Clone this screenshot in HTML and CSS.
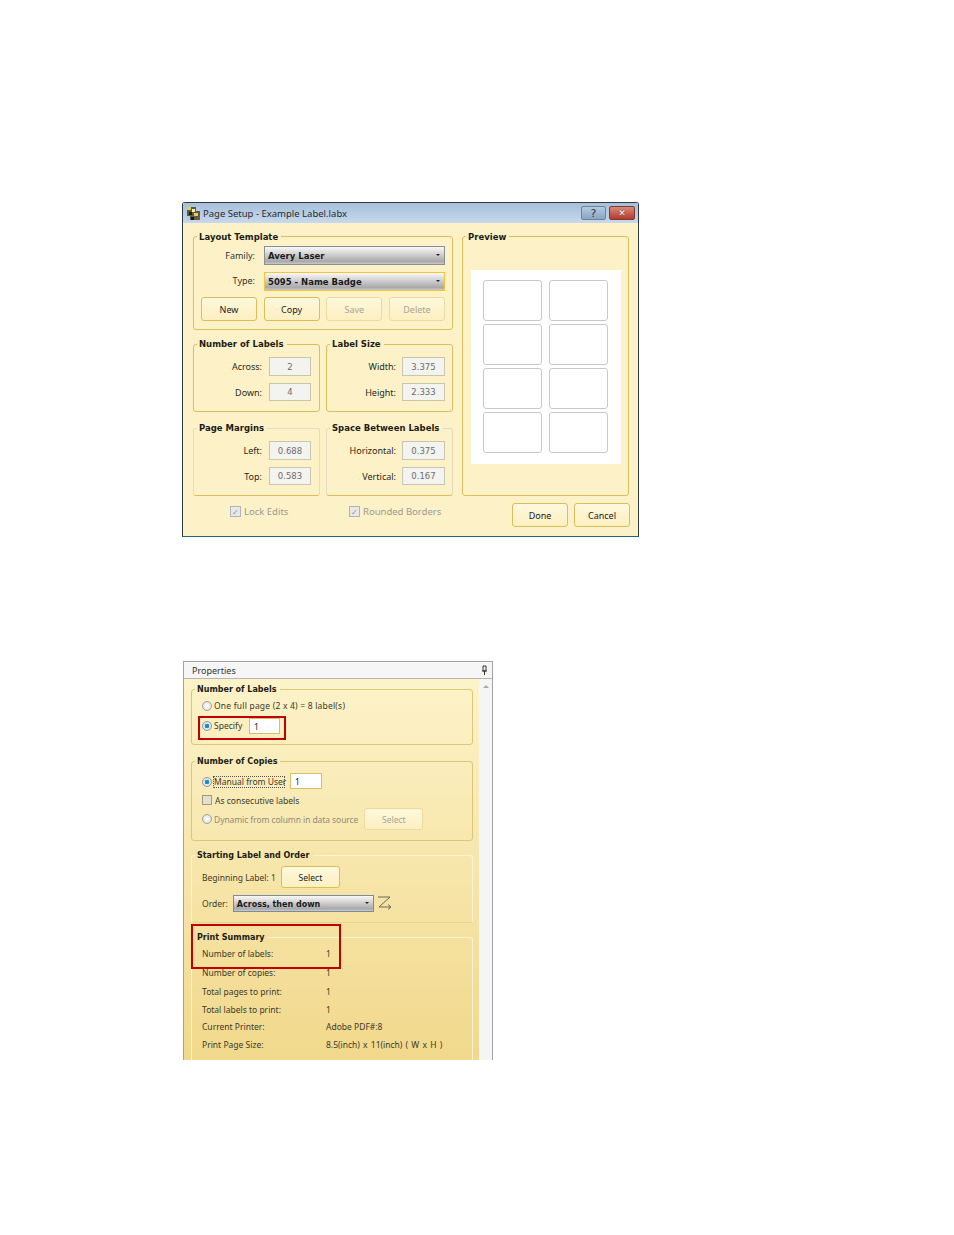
FILE: index.html
```html
<!DOCTYPE html>
<html lang="en">
<head>
  <meta charset="UTF-8">
  <title>Page Setup and Properties</title>
  <link rel="stylesheet" href="styles.css">
</head>
<body>

<div class="dialog">
  <div class="titlebar">
    <svg class="app-icon" width="13" height="13" viewBox="0 0 13 13">
      <rect width="13" height="13" fill="#5a5a4a"/>
      <rect x="0" y="0" width="4" height="3" fill="#e8d040"/>
      <rect x="5" y="2" width="3" height="3" fill="#f4e9b0"/>
      <rect x="9" y="0" width="4" height="4" fill="#b9cbe0"/>
      <rect x="2" y="5" width="3" height="3" fill="#1c1c1c"/>
      <rect x="7" y="6" width="4" height="3" fill="#e8d040"/>
      <rect x="0" y="9" width="3" height="4" fill="#b9cbe0"/>
      <rect x="4" y="10" width="3" height="3" fill="#161616"/>
      <rect x="10" y="10" width="3" height="3" fill="#b04030"/>
    </svg>
    <span class="title-text">Page Setup - Example Label.labx</span>
    <div class="win-btn help">?</div>
    <div class="win-btn close">✕</div>
  </div>

  <div class="dialog-main">
    <div class="left-col">
      <fieldset class="group template">
        <legend>Layout Template</legend>
        <div class="form-row">
          <label>Family:</label>
          <div class="combo">Avery Laser</div>
        </div>
        <div class="form-row">
          <label class="raised">Type:</label>
          <div class="combo focus">5095 - Name Badge</div>
        </div>
        <div class="btn-row">
          <button class="btn">New</button>
          <button class="btn">Copy</button>
          <button class="btn off">Save</button>
          <button class="btn off">Delete</button>
        </div>
      </fieldset>

      <div class="pair first">
        <fieldset class="group small">
          <legend>Number of Labels</legend>
          <div class="num-row"><label>Across:</label><div class="num">2</div></div>
          <div class="num-row"><label>Down:</label><div class="num">4</div></div>
        </fieldset>
        <fieldset class="group small right">
          <legend>Label Size</legend>
          <div class="num-row"><label>Width:</label><div class="num">3.375</div></div>
          <div class="num-row"><label>Height:</label><div class="num">2.333</div></div>
        </fieldset>
      </div>

      <div class="pair second">
        <fieldset class="group small pale">
          <legend>Page Margins</legend>
          <div class="num-row"><label>Left:</label><div class="num">0.688</div></div>
          <div class="num-row"><label>Top:</label><div class="num">0.583</div></div>
        </fieldset>
        <fieldset class="group small pale right">
          <legend>Space Between Labels</legend>
          <div class="num-row"><label>Horizontal:</label><div class="num">0.375</div></div>
          <div class="num-row"><label>Vertical:</label><div class="num">0.167</div></div>
        </fieldset>
      </div>
    </div>

    <fieldset class="group preview">
      <legend>Preview</legend>
      <div class="sheet">
        <div class="lbl"></div><div class="lbl"></div>
        <div class="lbl"></div><div class="lbl"></div>
        <div class="lbl"></div><div class="lbl"></div>
        <div class="lbl"></div><div class="lbl"></div>
      </div>
    </fieldset>
  </div>

  <div class="dialog-foot">
    <div class="check-item lock"><span class="check">✓</span>Lock Edits</div>
    <div class="check-item rounded"><span class="check">✓</span>Rounded Borders</div>
    <button class="btn done">Done</button>
    <button class="btn">Cancel</button>
  </div>
</div>

<div class="panel">
  <div class="panel-head">
    <span>Properties</span>
    <svg width="7" height="11" viewBox="0 0 7 11">
      <path d="M2 1h3v5H2zM1 6h5M3.500 6v4" fill="none" stroke="#333" stroke-width="1"/>
    </svg>
  </div>
  <div class="panel-body">
    <div class="panel-content">
      <fieldset class="pgroup g-labels">
        <legend>Number of Labels</legend>
        <div class="opt opt-full"><span class="radio"></span>One full page (2 x 4) = 8 label(s)</div>
        <div class="opt opt-spec"><span class="radio on"></span><span>Specify</span><div class="entry">1</div></div>
      </fieldset>

      <fieldset class="pgroup g-copies">
        <legend>Number of Copies</legend>
        <div class="opt opt-manual"><span class="radio on"></span><span class="dotted">Manual from User</span><div class="entry">1</div></div>
        <div class="opt opt-consec"><span class="box"></span>As consecutive labels</div>
        <div class="opt opt-dyn off-text"><span class="radio"></span>Dynamic from column in data source<button class="btn sel off">Select</button></div>
      </fieldset>

      <fieldset class="pgroup g-start pale">
        <legend>Starting Label and Order</legend>
        <div class="opt opt-begin">Beginning Label: 1<button class="btn sel">Select</button></div>
        <div class="opt opt-order">Order:<div class="combo short">Across, then down</div>
          <svg class="order-icon" width="16" height="14" viewBox="0 0 16 14">
            <path d="M1 1h12L2 11h12M11 8.500l3 2.500-3 2.500" fill="none" stroke="#6a6a5a" stroke-width="1"/>
          </svg>
        </div>
      </fieldset>

      <fieldset class="pgroup g-summary pale">
        <legend>Print Summary</legend>
        <div class="summary">
          <span>Number of labels:</span><span>1</span>
          <span>Number of copies:</span><span>1</span>
          <span>Total pages to print:</span><span>1</span>
          <span>Total labels to print:</span><span>1</span>
          <span>Current Printer:</span><span>Adobe PDF#:8</span>
          <span>Print Page Size:</span><span>8.5(inch) x 11(inch) ( W x H )</span>
        </div>
      </fieldset>
    </div>
    <div class="scrollbar"><span class="up"></span></div>
  </div>
  <div class="callout c-specify"></div>
  <div class="callout c-summary"></div>
</div>

</body>
</html>
```

FILE: styles.css
```css
* { box-sizing: border-box; }
html, body { margin: 0; padding: 0; }
body {
  background: #fff;
  color: #2a2a20;
  font-family: "Noto Sans", sans-serif;
  font-size: 8.5px;
  padding-top: 202px;
  height: 1235px;
  overflow: hidden;
}
fieldset { margin: 0; min-width: 0; }
legend {
  font-family: "DejaVu Sans", sans-serif;
  font-weight: bold;
  font-size: 8.5px;
  height: 12px;
  line-height: 14px;
  color: #1c1c14;
  padding: 0 3px 0 2px;
  margin-left: 3px;
}

/* dialog */
.dialog {
  margin-left: 182px;
  width: 457px;
  height: 335px;
  background: #fdf1c7;
  border: 1px solid #2f3a3c;
  border-bottom-color: #1d6a80;
  border-radius: 3px 3px 0 0;
}
.titlebar {
  height: 20px;
  display: flex;
  align-items: center;
  background: linear-gradient(#a6bfdb, #c6d9ed);
  padding: 0 3px 0 4px;
}
.app-icon { margin-right: 3px; }
.title-text { flex: 1; font-size: 9.5px; color: #2a2a2a; }
.win-btn {
  height: 14px;
  text-align: center;
  line-height: 13px;
  border: 1px solid #6f8296;
  border-radius: 2px;
  font-family: "DejaVu Sans", sans-serif;
  color: #fff;
  text-shadow: 0 0 1px #222;
}
.help { width: 25px; margin-right: 3px; font-size: 11px; background: linear-gradient(#b3cbe2, #8aa5c3); color: #333; text-shadow: none; }
.close { width: 26px; font-size: 9px; font-weight: bold; background: linear-gradient(#d98a78, #b63a2c); border-color: #7c3a35; }

.dialog-main {
  display: flex;
  gap: 9px;
  padding: 7px 9px 0 10px;
}
.left-col { width: 260px; }
.group {
  border: 1px solid #dcbd5e;
  border-radius: 3px;
  padding: 0;
}
.group.pale { border-color: #e3dcc0 #e3dcc0 #dcbd5e; }
.template { height: 100px; padding: 4px 7px 0 0; }
.form-row {
  display: flex;
  align-items: center;
  justify-content: flex-end;
  gap: 9px;
  margin-bottom: 7px;
  color: #333;
  font-size: 9px;
}
.raised { margin-bottom: 3px; }
.combo {
  width: 181px;
  height: 19px;
  line-height: 18px;
  padding-left: 3px;
  position: relative;
  font-family: "DejaVu Sans", sans-serif;
  font-weight: bold;
  font-size: 8.5px;
  color: #1a1a1a;
  border: 1px solid #8a8f96;
  background: linear-gradient(#f8f8f8, #d4d4d4 40%, #a9a9a9 85%, #c9c9c9);
}
.combo::after {
  content: "";
  position: absolute;
  right: 4px;
  top: 7px;
  border: 2.5px solid transparent;
  border-top-color: #222;
  border-bottom: 0;
}
.combo.focus { border-color: #f4c538; }
.combo.short { width: 141px; height: 17px; line-height: 17px; margin-left: 5px; border-color: #7e8aa0; font-size: 8px; }
.combo.short::after { top: 6px; }

.btn-row {
  display: flex;
  justify-content: space-between;
  padding-left: 7px;
  margin-top: -1px;
}
.btn {
  width: 56px;
  height: 24px;
  padding: 1px 0 0;
  border: 1px solid #dcbd5e;
  border-radius: 3px;
  background: linear-gradient(#fff8dc, #fdefc0);
  color: #222;
  font: 9px "Noto Sans", sans-serif;
}
.btn.off { color: #a8a596; border-color: #eadca0; }

.pair { display: flex; gap: 6px; }
.pair.first { margin-top: 8px; }
.pair.second { margin-top: 10px; }
.small { width: 127px; height: 74px; padding: 7px 8px 0 0; }
.small legend { line-height: 12px; }
.small.right { padding-right: 7px; }
.num-row {
  display: flex;
  align-items: center;
  justify-content: flex-end;
  gap: 7px;
  margin-bottom: 7px;
  font-size: 9px;
}
.num {
  width: 42px;
  height: 19px;
  line-height: 18px;
  text-align: center;
  background: #f3f3ef;
  border: 1px solid #c9c6b0;
  color: #6e6e6e;
  font-family: "DejaVu Sans", sans-serif;
  font-size: 8.5px;
}
.right .num-row { gap: 6px; }
.right .num { width: 43px; }
.num-row:last-child .num { height: 18px; line-height: 17px; }

.preview { width: 167px; height: 266px; padding: 0; }
.sheet {
  margin: 28px 0 0 8px;
  width: 150px;
  height: 194px;
  background: #fff;
  display: grid;
  grid-template-columns: 59px 59px;
  grid-auto-rows: 41px;
  gap: 3px 7px;
  padding: 10px 12px;
}
.lbl { border: 1px solid #c9c9c9; border-radius: 3px; }

.dialog-foot {
  display: flex;
  align-items: flex-start;
  margin-top: 7px;
  padding: 0 8px 0 10px;
}
.check-item {
  display: flex;
  align-items: center;
  gap: 3px;
  color: #9a9a92;
  font-size: 9.5px;
  height: 14px;
  margin-top: 1px;
}
.lock { margin-left: 37px; width: 119px; }
.rounded { width: 163px; }
.check {
  width: 11px;
  height: 11px;
  border: 1px solid #aab4c4;
  background: #e8e8e4;
  color: #8a96a8;
  font-size: 8px;
  line-height: 9px;
  text-align: center;
}
.done { margin-right: 6px; }

/* properties panel */
.panel {
  position: relative;
  margin: 124px 0 0 183px;
  width: 310px;
  height: 399px;
  overflow: hidden;
  border: 1px solid #a2a2a2;
  border-bottom: 0;
}
.panel-head {
  height: 17px;
  display: flex;
  align-items: center;
  justify-content: space-between;
  padding: 0 4px 0 8px;
  background: #f6f6f6;
  border-bottom: 1px solid #b5b5b5;
  font-size: 9px;
  color: #333;
}
.panel-body { display: flex; height: 381px; }
.panel-content {
  width: 295px;
  padding: 4px 6px 0 7px;
  background: linear-gradient(#fdf3c9, #f1d88b);
}
.scrollbar { flex: 1; background: #f5f5f5; position: relative; }
.up {
  position: absolute;
  left: 4px;
  top: 6px;
  border: 3px solid transparent;
  border-bottom-color: #aaa;
  border-top: 0;
}
.pgroup {
  border: 1px solid #dcc677;
  border-radius: 3px;
  padding: 0;
  width: 282px;
}
.pgroup legend { margin-left: 3px; padding: 0 3px 0 2px; font-size: 8px; line-height: 14px; }
.pgroup.pale { border-color: #fbf3d2 #fbf3d2 #ead48c; }
.g-labels { height: 62px; }
.g-copies { height: 86px; margin-top: 10px; }
.g-start { height: 74px; margin-top: 8px; }
.g-summary { height: 141px; margin-top: 8px; }

.opt {
  display: flex;
  align-items: center;
  margin-left: 10px;
  color: #3a3a2a;
  font-size: 8.5px;
}
.radio {
  width: 10px;
  height: 10px;
  margin-right: 2px;
  border-radius: 50%;
  border: 1px solid #a0a0a0;
  background: radial-gradient(#fff, #d8d8d8);
  flex: none;
}
.radio.on { background: radial-gradient(#1d8ac0 35%, #dfe6ea 45%); border-color: #8a9aa8; }
.box {
  width: 10px;
  height: 10px;
  margin-right: 3px;
  border: 1px solid #a09a80;
  background: #e4e0cf;
}
.entry {
  height: 16px;
  line-height: 15px;
  background: #fff;
  border: 1px solid #d8bf66;
  padding-left: 4px;
  color: #222;
}
.opt-full { margin-top: 5px; height: 12px; letter-spacing: 0.2px; line-height: 10px; }
.opt-spec { margin-top: 6px; height: 16px; line-height: 10px; }
.opt-spec > span:nth-child(2) { width: 35px; }
.opt-spec .entry { width: 31px; line-height: 15px; }
.opt-manual { margin-top: 6px; height: 16px; }
.opt-manual .radio { margin-top: 1px; }
.dotted { border: 1px dotted #555; line-height: 10px; padding: 0 1px 0 0; margin: 1px 0 0 -1px; width: 72px; white-space: nowrap; }
.opt-manual .entry { width: 32px; margin-left: 5px; }
.opt-consec { margin-top: 5px; height: 12px; }
.off-text { color: #8f8d7c; }
.opt-dyn { height: 22px; margin-top: 2px; letter-spacing: -0.08px; }
.sel { width: 59px; height: 22px; margin-left: 6px; font-size: 8.5px; letter-spacing: 0; }
.opt-begin { height: 22px; margin-top: 5px; }
.opt-begin .sel { margin-left: 5px; }
.opt-order { height: 18px; margin-top: 6px; }
.order-icon { margin-left: 3px; }

.summary {
  display: grid;
  grid-template-columns: 124px 1fr;
  grid-template-rows: 20px 19px 18px 18px 17px 18px;
  align-items: center;
  margin: 0 0 0 10px;
  color: #3a3a2a;
  font-size: 8.5px;
}
.summary span:last-child { word-spacing: 1px; }

/* red annotation boxes drawn over the screenshot */
.callout {
  position: absolute;
  border: 2px solid #c00000;
}
.c-specify { left: 14px; top: 54px; width: 88px; height: 24px; }
.c-summary { left: 7px; top: 262px; width: 150px; height: 45px; }
```
